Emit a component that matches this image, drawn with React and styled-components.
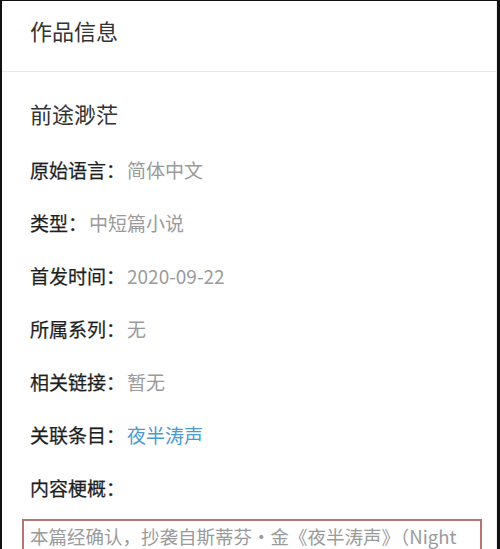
import React from "react";
import styled, { createGlobalStyle } from "styled-components";

const Global = createGlobalStyle`
  html, body { margin: 0; padding: 0; background: #fff; }
  body { font-family: "Noto Sans CJK SC", "Noto Sans", sans-serif; }
`;

const Frame = styled.div`
  box-sizing: border-box;
  width: 500px;
  height: 549px;
  overflow: hidden;
  background: #fff;
  border-top: 1px solid #111;
  border-left: 2px solid #111;
  border-right: 3px solid #111;
`;

const Inner = styled.div`
  height: 100%;
  border-right: 1px solid #ececec;
`;

const Header = styled.div`
  box-sizing: border-box;
  height: 71px;
  display: flex;
  align-items: center;
  padding: 0 0 12px 28px;
  font-size: 22px;
  color: #333;
  border-bottom: 1px solid #e6eaea;
`;

const Body = styled.div`
  padding: 15px 0 0 28px;
`;

const Title = styled.div`
  font-size: 22px;
  line-height: 53px;
  margin-bottom: 3px;
  color: #333;
`;

const Row = styled.div`
  font-size: 19px;
  line-height: 53px;
  white-space: nowrap;
`;

const Label = styled.span`
  color: #1e1e1e;
  font-weight: 400;
  -webkit-text-stroke: 0.25px #1e1e1e;
`;

const Value = styled.span`
  margin-left: 2px;
  color: ${(p) => (p.$link ? "#4b9ad0" : "#9a9a9a")};
`;

const Summary = styled.div`
  margin: 5px 0 0 -8px;
  width: 460px;
  box-sizing: border-box;
  border: 2px solid #b87474;
  border-bottom: none;
  padding: 0 6px;
  font-size: 18.5px;
  line-height: 30px;
  color: #9a9a9a;
`;

const rows = [
  ["原始语言", "简体中文"],
  ["类型", "中短篇小说"],
  ["首发时间", "2020-09-22"],
  ["所属系列", "无"],
  ["相关链接", "暂无"],
  ["关联条目", "夜半涛声", true],
];

export default function App() {
  return (
    <>
      <Global />
      <Frame>
        <Inner>
          <Header>作品信息</Header>
          <Body>
            <Title>前途渺茫</Title>
            {rows.map(([l, v, link]) => (
              <Row key={l}>
                <Label>{l}：</Label>
                <Value $link={link}>{v}</Value>
              </Row>
            ))}
            <Row>
              <Label>内容梗概：</Label>
            </Row>
            <Summary>
              本篇经确认，抄袭自斯蒂芬·金《夜半涛声》（Night Surf），原作收录于短篇小说集《守夜》。
            </Summary>
          </Body>
        </Inner>
      </Frame>
    </>
  );
}
